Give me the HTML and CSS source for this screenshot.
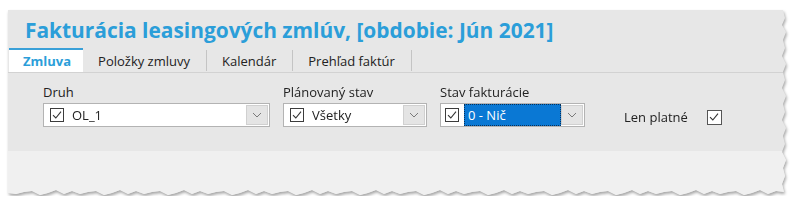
FILE: index.html
```html
<!DOCTYPE html>
<html lang="sk">
<head>
<meta charset="utf-8">
<title>Fakturácia leasingových zmlúv</title>
<link rel="stylesheet" href="styles.css">
</head>
<body>
<div class="page">
  <div class="shadow">
    <div class="panel">
      <div class="header">
        <h1 class="title">Fakturácia leasingových zmlúv, [obdobie: Jún 2021]</h1>
      </div>
      <div class="tabs">
        <div class="tab active">Zmluva</div>
        <div class="tab">Položky zmluvy</div>
        <div class="tab">Kalendár</div>
        <div class="tab">Prehľad faktúr</div>
      </div>
      <div class="form">
        <div class="field f-druh">
          <div class="label">Druh</div>
          <div class="combo">
            <div class="value">
              <span class="check"><svg viewBox="0 0 14 14" width="14" height="14"><path d="M3 7.2 L5.8 10 L11 3.6" fill="none" stroke="#333" stroke-width="1.1"/></svg></span>
              <span class="text">OL_1</span>
            </div>
            <div class="btn"><svg viewBox="0 0 10 6" width="10" height="6"><path d="M1 1 L5 5 L9 1" fill="none" stroke="#7a7a7a" stroke-width="1"/></svg></div>
          </div>
        </div>
        <div class="field f-plan">
          <div class="label">Plánovaný stav</div>
          <div class="combo">
            <div class="value">
              <span class="check"><svg viewBox="0 0 14 14" width="14" height="14"><path d="M3 7.2 L5.8 10 L11 3.6" fill="none" stroke="#333" stroke-width="1.1"/></svg></span>
              <span class="text">Všetky</span>
            </div>
            <div class="btn"><svg viewBox="0 0 10 6" width="10" height="6"><path d="M1 1 L5 5 L9 1" fill="none" stroke="#7a7a7a" stroke-width="1"/></svg></div>
          </div>
        </div>
        <div class="field f-stav">
          <div class="label">Stav fakturácie</div>
          <div class="combo">
            <div class="value sel">
              <span class="check"><svg viewBox="0 0 14 14" width="14" height="14"><path d="M3 7.2 L5.8 10 L11 3.6" fill="none" stroke="#333" stroke-width="1.1"/></svg></span>
              <span class="text selected">0 - Nič</span>
            </div>
            <div class="btn"><svg viewBox="0 0 10 6" width="10" height="6"><path d="M1 1 L5 5 L9 1" fill="none" stroke="#7a7a7a" stroke-width="1"/></svg></div>
          </div>
        </div>
        <div class="field f-len">
          <span class="len-label">Len platné</span>
          <span class="check free"><svg viewBox="0 0 14 14" width="14" height="14"><path d="M3 7.2 L5.8 10 L11 3.6" fill="none" stroke="#333" stroke-width="1.1"/></svg></span>
        </div>
      </div>
      <div class="footer"></div>
    </div>
  </div>
</div>
</body>
</html>
```
FILE: styles.css
```css
html, body {
  margin: 0;
  padding: 0;
  background: #ffffff;
}
.page {
  padding: 10px 0 0 8px;
  font-family: "Open Sans", "Noto Sans", sans-serif;
  color: #222;
}
.shadow {
  width: 780px;
  filter: drop-shadow(1px 2px 1.5px rgba(0, 0, 0, 0.35));
}
.panel {
  width: 780px;
  height: 186px;
  background: #e7e7e7;
  display: flex;
  flex-direction: column;
  clip-path: polygon(0 0, 775px 0, 777px 8px, 774px 15px, 778px 22px, 775px 30px, 777px 38px, 774px 46px, 778px 54px, 775px 62px, 777px 70px, 774px 78px, 778px 86px, 775px 94px, 777px 102px, 774px 110px, 778px 118px, 775px 126px, 777px 134px, 774px 142px, 778px 150px, 775px 158px, 777px 166px, 774px 174px, 776px 182px,
    768px 181px, 760px 184px, 752px 180px, 744px 183px, 736px 185px, 728px 181px, 720px 182px, 712px 184px,
    704px 181px, 696px 184px, 688px 180px, 680px 183px, 672px 185px, 664px 181px, 656px 182px, 648px 184px,
    640px 181px, 632px 184px, 624px 180px, 616px 183px, 608px 185px, 600px 181px, 592px 182px, 584px 184px,
    576px 181px, 568px 184px, 560px 180px, 552px 183px, 544px 185px, 536px 181px, 528px 182px, 520px 184px,
    512px 181px, 504px 184px, 496px 180px, 488px 183px, 480px 185px, 472px 181px, 464px 182px, 456px 184px,
    448px 181px, 440px 184px, 432px 180px, 424px 183px, 416px 185px, 408px 181px, 400px 182px, 392px 184px,
    384px 181px, 376px 184px, 368px 180px, 360px 183px, 352px 185px, 344px 181px, 336px 182px, 328px 184px,
    320px 181px, 312px 184px, 304px 180px, 296px 183px, 288px 185px, 280px 181px, 272px 182px, 264px 184px,
    256px 181px, 248px 184px, 240px 180px, 232px 183px, 224px 185px, 216px 181px, 208px 182px, 200px 184px,
    192px 181px, 184px 184px, 176px 180px, 168px 183px, 160px 185px, 152px 181px, 144px 182px, 136px 184px,
    128px 181px, 120px 184px, 112px 180px, 104px 183px, 96px 185px, 88px 181px, 80px 182px, 72px 184px,
    64px 181px, 56px 184px, 48px 180px, 40px 183px, 32px 185px, 24px 181px, 16px 182px, 8px 184px, 0 183px);
}
.header {
  height: 38px;
  padding-left: 17px;
  display: flex;
  align-items: flex-end;
}
.title {
  margin: 0 0 5px 0;
  font-size: 20.9px;
  font-weight: 700;
  line-height: 26px;
  color: #2b9ed9;
  white-space: nowrap;
}
.tabs {
  height: 24px;
  display: flex;
  border-bottom: 1px solid #d2d2d2;
  padding-left: 1px;
  font-size: 13px;
}
.tab {
  padding: 0 16px 0 15px;
  margin: 2px 0 1px 0;
  border-right: 1px solid #c4c4c4;
  display: flex;
  align-items: center;
  color: #222;
  white-space: nowrap;
}
.tab.active {
  margin: 0;
  padding: 0 12px 0 14px;
  border-right: none;
  border-top: 2px solid #3aa0d8;
  background: #ffffff;
  color: #2b9ed9;
  font-weight: 700;
}
.form {
  height: 67px;
  display: flex;
  align-items: flex-start;
  padding: 11px 0 0 35px;
  font-size: 13px;
}
.field {
  display: flex;
  flex-direction: column;
  margin-right: 13px;
}
.label {
  line-height: 17px;
  margin-bottom: 2px;
  white-space: nowrap;
}
.combo {
  height: 22px;
  border: 1px solid #b3b3b3;
  display: flex;
  background: #ffffff;
}
.f-druh .combo { width: 225px; }
.f-plan .combo { width: 142px; }
.f-stav .combo { width: 143px; }
.value {
  flex: 1;
  display: flex;
  align-items: center;
  padding-left: 6px;
}
.value.sel {
  padding-left: 4px;
}
.check {
  width: 14px;
  height: 14px;
  box-sizing: border-box;
  border: 1px solid #3c3c3c;
  background: #ffffff;
  display: flex;
  flex: none;
}
.check svg {
  display: block;
  margin: -1px;
}
.text {
  margin-left: 8px;
  line-height: 22px;
}
.text.selected {
  flex: 1;
  align-self: stretch;
  margin: 0 0 0 5px;
  padding-left: 3px;
  background: #0a78d4;
  color: #ffffff;
  box-sizing: border-box;
  border: 1px dotted #08315a;
  line-height: 20px;
}
.btn {
  width: 20px;
  margin: 1px 1px 1px 0;
  background: #e4e4e4;
  border: 1px solid #d0d0d0;
  display: flex;
  align-items: center;
  justify-content: center;
}
.f-len {
  flex-direction: row;
  align-items: center;
  margin-top: 22px;
  margin-left: 26px;
  height: 22px;
}
.len-label {
  white-space: nowrap;
}
.check.free {
  width: 15px;
  height: 15px;
  margin-left: 19px;
  border-color: #555;
}
.footer {
  flex: 1;
  background: #f0f0f0;
}
```
